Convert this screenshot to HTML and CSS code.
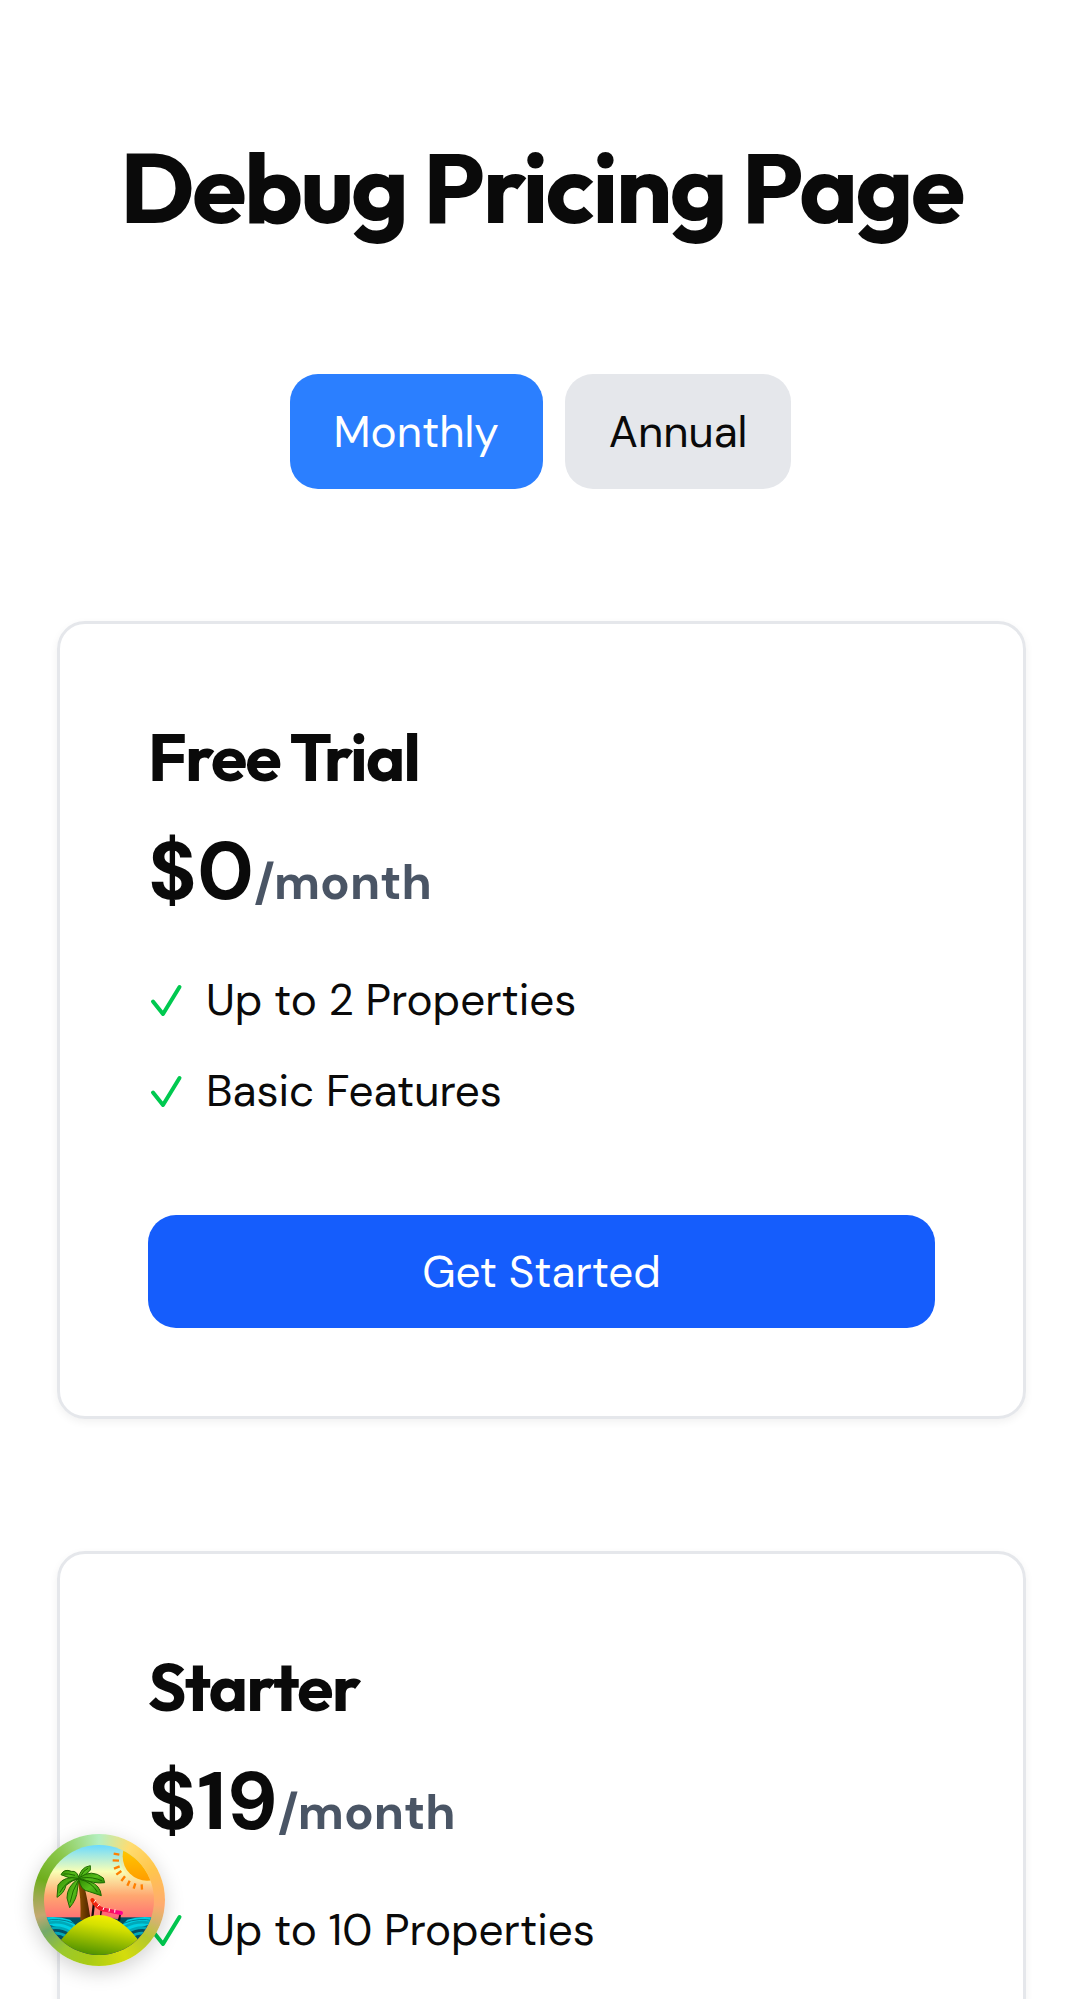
FILE: index.html
```html
<!DOCTYPE html>
<html lang="en">
<head>
  <meta charset="utf-8">
  <meta name="viewport" content="width=device-width, initial-scale=1">
  <title>Debug Pricing Page</title>
  <link rel="stylesheet" href="styles.css">
</head>
<body>
  <main class="page">
    <h1 class="title">Debug Pricing Page</h1>
    <div class="toggle">
      <button type="button" class="toggle-button toggle-monthly">Monthly</button>
      <button type="button" class="toggle-button toggle-annual">Annual</button>
    </div>
    <div class="plans">
      <section class="card">
        <h2 class="plan-name">Free Trial</h2>
        <p class="price">$0<span class="period">/month</span></p>
        <ul class="features">
          <li class="feature"><svg class="check" viewBox="0 0 36 36" aria-hidden="true"><path d="M5 18.500L15 31L31.500 4"/></svg>Up to 2 Properties</li>
          <li class="feature"><svg class="check" viewBox="0 0 36 36" aria-hidden="true"><path d="M5 18.500L15 31L31.500 4"/></svg>Basic Features</li>
        </ul>
        <button type="button" class="cta">Get Started</button>
      </section>
      <section class="card">
        <h2 class="plan-name">Starter</h2>
        <p class="price">$19<span class="period">/month</span></p>
        <ul class="features">
          <li class="feature"><svg class="check" viewBox="0 0 36 36" aria-hidden="true"><path d="M5 18.500L15 31L31.500 4"/></svg>Up to 10 Properties</li>
        </ul>
      </section>
    </div>
  </main>
  <button type="button" class="devtools" aria-label="Open query devtools">
    <svg class="island" viewBox="72 75 330 330" aria-hidden="true">
      <defs>
        <linearGradient id="sky" x1="0" y1="0" x2="0" y2="1">
          <stop offset="0" stop-color="#6bdaff"/>
          <stop offset=".24" stop-color="#f9ffb5"/>
          <stop offset=".46" stop-color="#ffa770"/>
          <stop offset=".66" stop-color="#ff7373"/>
        </linearGradient>
        <linearGradient id="sun" x1="0" y1="0" x2="0" y2="1">
          <stop offset="0" stop-color="#ffdf00"/><stop offset="1" stop-color="#ff9d00"/>
        </linearGradient>
        <linearGradient id="sand" x1=".75" y1="0" x2=".3" y2="1">
          <stop offset="0" stop-color="#fff400"/><stop offset=".3" stop-color="#d5e000"/><stop offset="1" stop-color="#3c8700"/>
        </linearGradient>
        <linearGradient id="trunk" x1="0" y1="0" x2="1" y2="0">
          <stop offset="0" stop-color="#915300"/><stop offset="1" stop-color="#4a2200"/>
        </linearGradient>
        <linearGradient id="leaf" x1="0" y1="0" x2="1" y2="1">
          <stop offset="0" stop-color="#2f8a00"/><stop offset=".5" stop-color="#57bd1b"/><stop offset="1" stop-color="#2f8f08"/>
        </linearGradient>
        <linearGradient id="chair" x1="0" y1="0" x2="1" y2="0">
          <stop offset="0" stop-color="#ee2700"/><stop offset="1" stop-color="#ff008e"/>
        </linearGradient>
        <clipPath id="disc"><circle cx="237" cy="240" r="165"/></clipPath>
      </defs>
      <g clip-path="url(#disc)">
        <rect x="72" y="75" width="330" height="330" fill="url(#sky)"/>
        <circle cx="383" cy="107" r="84" fill="#ffe090" opacity=".4"/>
        <circle cx="381" cy="109" r="73" fill="url(#sun)"/>
        <path d="M281 101L298 104M278 121L297 122M282 146L299 139M289 164L304 153M304 183L315 169M322 197L329 182M341 206L346 190M366 209L365 193" stroke="#ff8000" stroke-width="7"/>
        <rect x="72" y="292" width="330" height="113" fill="#015064"/>
        <path d="M72 293Q112 287 150 299L182 330L140 330L72 310ZM402 293Q360 287 322 299L292 330L335 330L402 310Z" fill="#00cfe2"/>
        <path d="M72 313Q115 297 158 320M72 330Q115 313 150 336M72 348Q110 330 140 350M402 313Q360 297 314 320M402 330Q358 313 324 336M402 348Q362 330 334 350" fill="none" stroke="#00a8b8" stroke-width="8"/>
        <path d="M72 303Q115 291 162 310M402 303Q359 291 310 310" fill="none" stroke="#007e94" stroke-width="3"/>
        <path d="M222 247L217 292M245 268L243 292M300 278L297 302" stroke="#160b0b" stroke-width="7"/>
        <path d="M246 272L299 281L294 298L243 290Z" fill="#ff6575" opacity=".9"/>
        <path d="M217 240Q232 266 252 269Q277 275 303 279" fill="none" stroke="url(#chair)" stroke-width="12" stroke-linecap="round"/>
        <path d="M227 240L222 248M239 253L232 260M252 262L249 270M269 265L267 275M285 268L284 278" stroke="#fff" stroke-width="3"/>
        <path d="M173 184L188 180Q202 230 212 300L181 300Q184 230 173 184Z" fill="url(#trunk)"/>
        <g fill="url(#leaf)" stroke="#1e6900" stroke-width="3" stroke-linejoin="round">
          <path d="M178 177Q147 176 123 164Q132 145 154 154Q172 151 178 177Z"/>
          <path d="M176 176Q180 142 211 137L211 150Q197 169 176 176Z"/>
          <path d="M176 176Q134 165 114 195L111 232Q133 219 138 196Q155 181 176 176Z"/>
          <path d="M176 176Q140 199 141 234L149 263Q171 237 172 210Z"/>
          <path d="M177 174Q214 145 250 174L254 188Q225 193 177 174Z"/>
          <path d="M177 177Q180 211 208 215L244 227Q241 196 210 185Z"/>
        </g>
        <path d="M176 177Q141 178 119 218M175 181Q157 211 150 248M180 178Q216 187 232 216M184 174Q218 169 247 183M181 170Q190 151 205 144M165 166Q145 160 130 162" fill="none" stroke="#1e6900" stroke-width="3"/>
        <path d="M109 378Q177 285 237 285Q304 286 368 378L402 410H72Z" fill="url(#sand)"/>
      </g>
    </svg>
  </button>
</body>
</html>
```
FILE: styles.css
```css
*, *::before, *::after { box-sizing: border-box; }

body {
  margin: 0;
  background: #fff;
  color: #0a0a0a;
  font-family: "DM Sans", Inter, sans-serif;
  font-size: 44px;
  font-variation-settings: "opsz" 16;
  line-height: 66px;
}

h1, h2, p, ul { margin: 0; padding: 0; }

button {
  border: 0;
  font: inherit;
  font-variation-settings: inherit;
  color: inherit;
  cursor: pointer;
}

.page {
  height: 100vh;
  padding: 132px 55px 0 57px;
  overflow-y: auto;
  scrollbar-width: none;
}

.title {
  font-family: Outfit, Lato, sans-serif;
  font-size: 99px;
  font-weight: 700;
  line-height: 110px;
  letter-spacing: -0.025em;
  text-align: center;
  white-space: nowrap;
}

.toggle {
  display: flex;
  justify-content: center;
  gap: 22px;
  padding-right: 2px;
  margin: 132px 0;
}

.toggle-button {
  height: 115px;
  padding: 0 44px;
  border-radius: 28px;
}

.toggle-monthly {
  background: #2b7fff;
  color: #fff;
}

.toggle-annual {
  background: #e5e7eb;
}

.plans {
  display: grid;
  gap: 132px;
}

.card {
  padding: 88px;
  border: 3px solid #e5e7eb;
  border-radius: 28px;
  box-shadow: 0 3px 8px rgba(0, 0, 0, .06);
}

.plan-name {
  font-family: Outfit, Lato, sans-serif;
  font-size: 66px;
  font-weight: 700;
  line-height: 90px;
  letter-spacing: -0.025em;
}

.price {
  margin-top: 20px;
  font-size: 81px;
  font-variation-settings: "opsz" 30;
  font-weight: 700;
  line-height: 100px;
}

.period {
  color: #4a5565;
  font-size: 49px;
  font-variation-settings: "opsz" 18;
  line-height: 1;
}

.features {
  display: grid;
  gap: 22px;
  margin-top: 44px;
  list-style: none;
}

.feature {
  display: flex;
  align-items: center;
  gap: 22px;
  line-height: 69px;
}

.check {
  width: 36px;
  height: 36px;
  fill: none;
  stroke: #00c950;
  stroke-width: 4;
  stroke-linecap: round;
  stroke-linejoin: round;
}

.cta {
  display: block;
  width: 100%;
  height: 113px;
  margin-top: 89px;
  border-radius: 28px;
  background: #155dfc;
  color: #fff;
}

.devtools {
  position: fixed;
  bottom: 33px;
  left: 33px;
  width: 132px;
  height: 132px;
  padding: 11px;
  border-radius: 50%;
  background: conic-gradient(#b4efc0, #ffdc70 30deg, #ffc64c 60deg, #ffab70 95deg, #d0b56a 112deg, #b5c82c 128deg, #d4dc0c 155deg, #a9cb14 190deg, #9cc92b 215deg, #74a96a 240deg, #c3a870 255deg, #9eaa50 272deg, #6fae1d 290deg, #8bc84c 320deg, #b4efc0);
  box-shadow: 0 6px 20px rgba(0, 0, 0, .18);
}

.island {
  display: block;
  width: 110px;
  height: 110px;
}
```
